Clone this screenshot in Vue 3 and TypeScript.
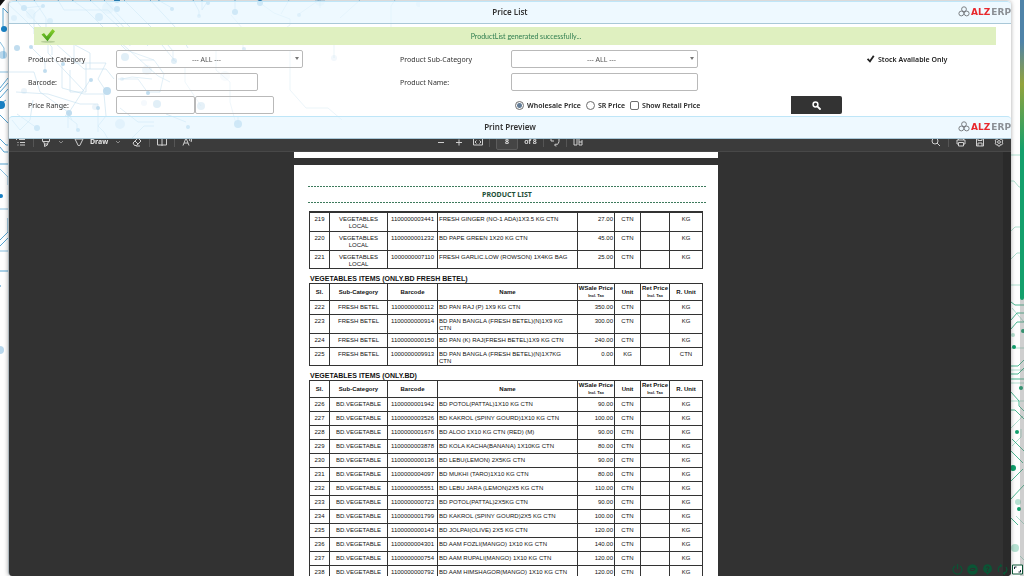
<script setup lang="ts">
import { ref } from 'vue'

interface Item {
  sl: number
  sub: string
  barcode: string
  name: string
  price: string
  unit: string
  rUnit: string
}

interface Section {
  title: string
  items: Item[]
}

function item(sl: number, sub: string, barcode: string, name: string, price: string, unit = 'CTN', rUnit = 'KG'): Item {
  return { sl, sub, barcode, name, price, unit, rUnit }
}

const LOCAL = 'VEGETABLES\nLOCAL'
const BETEL = 'FRESH BETEL'
const BD = 'BD.VEGETABLE'

const sections: Section[] = [
  {
    title: '',
    items: [
      item(219, LOCAL, '1100000003441', 'FRESH GINGER (NO-1 ADA)1X3.5 KG CTN', '27.00'),
      item(220, LOCAL, '1100000001232', 'BD PAPE GREEN 1X20 KG CTN', '45.00'),
      item(221, LOCAL, '1000000007110', 'FRESH GARLIC.LOW (ROWSON) 1X4KG BAG', '25.00'),
    ],
  },
  {
    title: 'VEGETABLES ITEMS (ONLY.BD FRESH BETEL)',
    items: [
      item(222, BETEL, '1100000000112', 'BD PAN RAJ (P) 1X9 KG CTN', '350.00'),
      item(223, BETEL, '1100000000914', 'BD PAN BANGLA (FRESH BETEL)(N)1X9 KG\nCTN', '300.00'),
      item(224, BETEL, '1100000000150', 'BD PAN (K) RAJ(FRESH BETEL)1X9 KG CTN', '240.00'),
      item(225, BETEL, '1000000009913', 'BD PAN BANGLA (FRESH BETEL)(N)1X7KG\nCTN', '0.00', 'KG', 'CTN'),
    ],
  },
  {
    title: 'VEGETABLES ITEMS (ONLY.BD)',
    items: [
      item(226, BD, '1100000001942', 'BD POTOL(PATTAL)1X10 KG CTN', '90.00'),
      item(227, BD, '1100000003526', 'BD KAKROL (SPINY GOURD)1X10 KG CTN', '100.00'),
      item(228, BD, '1100000001676', 'BD ALOO 1X10 KG CTN (RED) (M)', '90.00'),
      item(229, BD, '1100000003878', 'BD KOLA KACHA(BANANA) 1X10KG CTN', '80.00'),
      item(230, BD, '1100000000136', 'BD LEBU(LEMON) 2X5KG CTN', '90.00'),
      item(231, BD, '1100000004097', 'BD MUKHI (TARO)1X10 KG CTN', '80.00'),
      item(232, BD, '1100000005551', 'BD LEBU JARA (LEMON)2X5 KG CTN', '110.00'),
      item(233, BD, '1100000000723', 'BD POTOL(PATTAL)2X5KG CTN', '90.00'),
      item(234, BD, '1100000001799', 'BD KAKROL (SPINY GOURD)2X5 KG CTN', '100.00'),
      item(235, BD, '1100000000143', 'BD JOLPAI(OLIVE) 2X5 KG CTN', '120.00'),
      item(236, BD, '1100000004301', 'BD AAM FOZLI(MANGO) 1X10 KG CTN', '140.00'),
      item(237, BD, '1100000000754', 'BD AAM RUPALI(MANGO) 1X10 KG CTN', '120.00'),
      item(238, BD, '1100000000792', 'BD AAM HIMSHAGOR(MANGO) 1X10 KG CTN', '120.00'),
    ],
  },
]

const priceType = ref<'wholesale' | 'sr'>('wholesale')
const showRetail = ref(false)
const stockOnly = ref(true)
const category = ref('all')
const subCategory = ref('all')
const barcode = ref('')
const productName = ref('')
const priceFrom = ref('')
const priceTo = ref('')
const pageNo = ref('8')
</script>

<template>
  <div class="desktop">
    <svg class="circuit circuit-left" width="420" height="576" viewBox="0 0 420 576" fill="none" stroke="#2a8cc4" stroke-width="1" aria-hidden="true">
      <path d="M0 0h5l-5 6z" fill="#111" stroke="none" />
      <g stroke-opacity=".8">
        <path d="M3 8v20M3 8l5 5M0 88l8-10M0 92l8-9M0 98l8-9M0 104l6-4M0 115l8 8M0 139l6 6h3M0 147l4 5h5M0 164h9M0 240l8-8v-14M0 246l8-8M0 271h9" />
      </g>
      <g stroke-opacity=".55">
        <path d="M0 169l8 8v8M0 209h9M0 251h9M0 42l4 6v10" />
        <path d="M8 4l14 13 30 30v8M16 0l32 35v18l36 38M24 8l19-2M34 0l12 18v17l38 34h22l8 10M58 0l6 10h44l20 22 2 14M43 6l-9 8v20M72 0l14 10 40 40 28 10M90 0l30 28v14l38 34 12 6M104 0l44 46M150 0l26 28 12 20M124 0l40 40h16M172 8l-14-8M193 0l6 11v5M207 2l-5 8v-10M235 10v-10" />
        <path d="M31 47l14 14v10M62 64v24l22 6h20l2 22-8 10 6 6 8 14h12l20-20h10M75 45l15 8v16M90 80l-22 34v14M106 91l-8-12 8-16h-32v-18M16 92l32 2 32 10h18v28M12 120l8 10 10-10 3-20M0 72h34l6 20 28 20 4 8M140 60h14l10 14-4 18h-12M158 40l8 10 10 12M148 93l-10-14h-20M173 61v-10l-12-14M122 79l10-2 20 2" />
        <path d="M77 130v-6l-12-9M37 128l-20-14M70 70v22h16v-28M120 108l18 14h16M186 122l-20-8M238 124v-8" />
      </g>
      <g stroke-opacity=".3">
        <path d="M260 3l14 10 16 6v6l-20 14M299 14l20-14M281 14l8-14M320 0v8M340 18l20-18M391 40v-34l4-6M216 50v20l14 12v20l6 22M243 49v-20l-12-14M290 50v40l16 18h22l14 12M334 58v-14M201 106l-16-24v-14" />
      </g>
      <g stroke="none" fill="#187fc2">
        <circle cx="4" cy="29" r="3" /><circle cx="1" cy="105" r="4" /><circle cx="1" cy="196" r="2" />
        <circle cx="3" cy="55" r="4" opacity=".3" /><circle cx="0" cy="350" r="4" opacity=".3" /><circle cx="0" cy="286" r="1" opacity=".6" />
      </g>
      <g stroke="none" fill="#187fc2" opacity=".9">
        <circle cx="24" cy="8" r="3" /><circle cx="43" cy="6" r="2" /><circle cx="117" cy="0" r="3" /><circle cx="117" cy="9" r="3" />
        <circle cx="99" cy="17" r="4" opacity=".7" /><circle cx="50" cy="21" r="3" opacity=".6" /><circle cx="14" cy="18" r="3" opacity=".5" />
        <circle cx="172" cy="9" r="2" /><circle cx="235" cy="12" r="3" /><circle cx="260" cy="3" r="3" /><circle cx="208" cy="3" r="2" />
        <circle cx="199" cy="16" r="2" opacity=".5" /><circle cx="299" cy="15" r="2" opacity=".5" /><circle cx="108" cy="8" r="6" opacity=".25" />
        <circle cx="31" cy="14" r="5" opacity=".25" /><circle cx="320" cy="1" r="5" opacity=".2" /><circle cx="419" cy="4" r="3" opacity=".2" />
        <circle cx="17" cy="48" r="3" /><circle cx="31" cy="47" r="2" /><circle cx="63" cy="64" r="2" /><circle cx="45" cy="71" r="2" />
        <circle cx="91" cy="80" r="2" /><circle cx="107" cy="91" r="4" /><circle cx="98" cy="108" r="2" /><circle cx="69" cy="113" r="3" />
        <circle cx="125" cy="57" r="4" opacity=".6" /><circle cx="174" cy="61" r="3" opacity=".6" /><circle cx="148" cy="93" r="2" />
        <circle cx="157" cy="104" r="4" opacity=".6" /><circle cx="122" cy="79" r="2" opacity=".4" /><circle cx="201" cy="106" r="4" opacity=".5" />
        <circle cx="24" cy="91" r="3" opacity=".3" /><circle cx="95" cy="107" r="3" opacity=".3" /><circle cx="144" cy="103" r="3" opacity=".2" />
        <circle cx="244" cy="49" r="2" opacity=".5" /><circle cx="334" cy="58" r="3" opacity=".2" /><circle cx="225" cy="76" r="5" opacity=".15" />
        <circle cx="37" cy="128" r="3" /><circle cx="78" cy="130" r="2" /><circle cx="188" cy="127" r="2" /><circle cx="238" cy="124" r="4" />
        <circle cx="120" cy="124" r="5" opacity=".4" /><circle cx="147" cy="70" r="5" opacity=".25" />
      </g>
    </svg>

    <svg class="circuit circuit-right" width="14" height="576" viewBox="0 0 14 576" fill="none" stroke="#1fa577" stroke-width="1" aria-hidden="true">
      <g stroke-opacity=".35">
        <path d="M0 155h14M1 181h3l5 6h5M0 232l5-5h9M0 260l7-7h7M0 285h14M2 308l12 14M0 348h14M0 370h14M0 401h14M0 383h14M1 428l12-12M2 446l9-9v-8M6 516l8 8M10 556l4 4" />
      </g>
      <g stroke-opacity=".8">
        <path d="M1 302l4 3h9M1 320l6-7h7M1 329l6-7h7M0 366h8l6-6M0 374h8l6-6M0 379h14M1 392l8 9v5l5 5M1 410h4l9 9M2 439l12 12M1 451l12 12M1 481l12-12M1 499l13-14M0 517l8 8" />
      </g>
      <g stroke="none" fill="#119f6c">
        <circle cx="4" cy="347" r="2" /><circle cx="13" cy="331" r="2" /><circle cx="11" cy="388" r="2" /><circle cx="7" cy="432" r="2" /><circle cx="3" cy="468" r="3" /><circle cx="9" cy="509" r="2" />
        <circle cx="3" cy="335" r="2" opacity=".3" /><circle cx="8" cy="502" r="3" opacity=".3" /><circle cx="5" cy="548" r="4" opacity=".3" />
      </g>
    </svg>

    <div class="page-scroll" aria-hidden="true"><div class="page-thumb"></div></div>

    <main class="window">
      <header class="bar">
        <span></span>
        <h1>Price List</h1>
        <div class="brand">
          <svg width="12" height="11" viewBox="0 0 12 11" fill="none" stroke="#7b7f83" stroke-width="1"><circle cx="6" cy="3.2" r="2.4" /><circle cx="3.3" cy="7.5" r="2.4" /><circle cx="8.7" cy="7.5" r="2.4" /></svg>
          <span class="alz">ALZ</span><span class="erp">ERP</span>
        </div>
      </header>

      <div class="notice" role="status">
        <svg class="tick" width="16" height="14" viewBox="0 0 16 14">
          <defs><linearGradient id="tickFill" x1="0" y1="0" x2="0" y2="1"><stop offset="0" stop-color="#8ed32a" /><stop offset="1" stop-color="#3d9a1c" /></linearGradient></defs>
          <ellipse cx="8" cy="12.8" rx="7" ry="1" fill="#b8cf9b" />
          <path d="M1.5 5.5 4 4l2.7 3.2L12.5 0 15 2.2 7.5 12.2z" fill="url(#tickFill)" />
        </svg>
        <span>ProductList generated successfully...</span>
      </div>

      <form class="filters" @submit.prevent>
        <label for="category">Product Category</label>
        <div class="select">
          <select id="category" v-model="category"><option value="all">--- ALL ---</option></select>
          <svg width="4" height="3" viewBox="0 0 4 3"><path d="M0 0h4L2 3z" fill="#777" /></svg>
        </div>
        <label for="subcategory">Product Sub-Category</label>
        <div class="select">
          <select id="subcategory" v-model="subCategory"><option value="all">--- ALL ---</option></select>
          <svg width="4" height="3" viewBox="0 0 4 3"><path d="M0 0h4L2 3z" fill="#777" /></svg>
        </div>
        <label class="choice stock">
          <input v-model="stockOnly" type="checkbox" class="plain" />
          <span>Stock Available Only</span>
        </label>

        <label for="barcode">Barcode:</label>
        <input id="barcode" v-model="barcode" class="field barcode" type="text" />
        <label for="name">Product Name:</label>
        <input id="name" v-model="productName" class="field name" type="text" />
        <span></span>

        <label for="from">Price Range:</label>
        <div class="range">
          <input id="from" v-model="priceFrom" class="field" type="text" />
          <input v-model="priceTo" class="field" type="text" aria-label="Price to" />
        </div>
        <span></span>
        <div class="choices">
          <label class="choice"><input v-model="priceType" type="radio" name="price" value="wholesale" /><span>Wholesale Price</span></label>
          <label class="choice"><input v-model="priceType" type="radio" name="price" value="sr" /><span>SR Price</span></label>
          <label class="choice"><input v-model="showRetail" type="checkbox" /><span>Show Retail Price</span></label>
        </div>
        <button class="search" type="submit" aria-label="Search">
          <svg width="9" height="9" viewBox="0 0 9 9" fill="none" stroke="#fff"><circle cx="3.500" cy="3.500" r="2.400" stroke-width="1.500" /><path d="M5.300 5.300 8 8" stroke-width="1.800" stroke-linecap="round" /></svg>
        </button>
      </form>

      <header class="bar">
        <span></span>
        <h1>Print Preview</h1>
        <div class="brand">
          <svg width="12" height="11" viewBox="0 0 12 11" fill="none" stroke="#7b7f83" stroke-width="1"><circle cx="6" cy="3.2" r="2.4" /><circle cx="3.3" cy="7.5" r="2.4" /><circle cx="8.7" cy="7.5" r="2.4" /></svg>
          <span class="alz">ALZ</span><span class="erp">ERP</span>
        </div>
      </header>

      <section class="viewer">
        <div class="toolbar">
          <div class="tools">
            <button type="button" aria-label="Contents"><svg width="10" height="10" viewBox="0 0 10 10"><path d="M0 2.500h1M3 2.500h6M1.500 5.500h1M4 5.500h5M1.500 8h1M4 8h5" /></svg></button>
            <i></i>
            <button type="button" aria-label="Highlight"><svg width="10" height="10" viewBox="0 0 10 10"><path d="M1.500 1v3.500h7V1M2.500 4.500 3.500 7h3l1-2.500M3.500 7v2.500l3-1.500V7" /></svg></button>
            <button type="button" aria-label="Highlight colours"><svg width="6" height="10" viewBox="0 0 6 10"><path d="m1 4 2 2 2-2" stroke="#8a8a8a" /></svg></button>
            <button type="button" class="draw"><svg width="10" height="10" viewBox="0 0 10 10"><path d="M1 2h8L5.800 8.500H4.200z" /></svg><b>Draw</b></button>
            <button type="button" aria-label="Pen options"><svg width="6" height="10" viewBox="0 0 6 10"><path d="m1 4 2 2 2-2" stroke="#8a8a8a" /></svg></button>
            <button type="button" class="eraser" aria-label="Erase"><svg width="10" height="10" viewBox="0 0 10 10"><path d="M1 6 6 1l3 3-4.500 4.500h-2zM3 4l3.200 3.200M4 9h4" /></svg></button>
            <i></i>
            <button type="button" aria-label="Page view"><svg width="10" height="10" viewBox="0 0 10 10"><path d="M.500 1.500h9v6.500h-9zM5 1.500v7.500" /></svg></button>
            <i></i>
            <button type="button" aria-label="Read aloud"><svg width="10" height="10" viewBox="0 0 10 10"><path d="M1 8.500 4 1l3 7.500M2 6h4M7.500 2q1 1 0 2M9 1q1.500 2 0 4" /></svg></button>
          </div>
          <div class="tools middle">
            <button type="button" class="minus" aria-label="Zoom out"><svg width="8" height="10" viewBox="0 0 8 10"><path d="M1 5.500h6" /></svg></button>
            <button type="button" class="plus" aria-label="Zoom in"><svg width="8" height="10" viewBox="0 0 8 10"><path d="M1 5.500h6M4 2.500v6" /></svg></button>
            <button type="button" aria-label="Fit width"><svg width="10" height="10" viewBox="0 0 10 10"><path d="M.500 1.500h9v6.500h-9zM3.500 3.500 2 5l1.500 1.500M6.500 3.500 8 5 6.500 6.500" /></svg></button>
            <i></i>
            <div class="pager"><input v-model="pageNo" type="text" aria-label="Page" /><span>of 8</span></div>
            <i></i>
            <button type="button" aria-label="Rotate"><svg width="10" height="10" viewBox="0 0 10 10"><path d="M1 1v3h3M6 9.500 4.500 8 6 6.500M5 8q4.500 0 4-6" /></svg></button>
            <i></i>
            <button type="button" aria-label="Layout"><svg width="10" height="10" viewBox="0 0 10 10"><path d="M1 1.500v6.500h3V1.500M6 8h3V3M6 1.500V8M6 5h3" /></svg></button>
          </div>
          <div class="tools end">
            <button type="button" aria-label="Find"><svg width="10" height="10" viewBox="0 0 10 10"><circle cx="4" cy="4" r="3" /><path d="m6 6 3 3" /></svg></button>
            <i></i>
            <button type="button" aria-label="Print"><svg width="10" height="10" viewBox="0 0 10 10"><path d="M2.500 3V1h5v2M2.500 7H1V3h8v4H7.500M2.500 5.500h5V9h-5z" /></svg></button>
            <button type="button" aria-label="Save"><svg width="10" height="10" viewBox="0 0 10 10"><path d="M1.500 1h6l1 1v7h-7zM3 1v2.500h4V1M3 9V6h4v3" /></svg></button>
            <button type="button" aria-label="Settings"><svg width="10" height="10" viewBox="0 0 10 10"><circle cx="5" cy="5" r="1.400" /><path d="M4 1h2l.4 1.400 1.400-.2 1 1.700L8 5l.8 1.200-1 1.700-1.400-.3L6 9H4l-.4-1.400-1.400.3-1-1.700L2 5l-.8-1.100 1-1.700 1.400.2z" /></svg></button>
          </div>
        </div>

        <div class="canvas">
          <div class="sheet previous"></div>
          <article class="sheet">
            <h2>PRODUCT LIST</h2>
            <template v-for="(section, s) in sections" :key="s">
              <h3 v-if="section.title">{{ section.title }}</h3>
              <table :class="{ continued: !section.title }">
                <colgroup>
                  <col class="c-sl" /><col class="c-sub" /><col class="c-code" /><col class="c-name" />
                  <col class="c-price" /><col class="c-unit" /><col class="c-ret" /><col />
                </colgroup>
                <thead v-if="section.title">
                  <tr>
                    <th>Sl.</th>
                    <th>Sub-Category</th>
                    <th>Barcode</th>
                    <th>Name</th>
                    <th>WSale Price<small>Incl. Tax</small></th>
                    <th>Unit</th>
                    <th>Ret Price<small>Incl. Tax</small></th>
                    <th>R. Unit</th>
                  </tr>
                </thead>
                <tbody>
                  <tr v-for="row in section.items" :key="row.sl" :class="{ tall: (row.sub + row.name).includes('\n') }">
                    <td>{{ row.sl }}</td>
                    <td>{{ row.sub }}</td>
                    <td>{{ row.barcode }}</td>
                    <td class="left">{{ row.name }}</td>
                    <td class="right">{{ row.price }}</td>
                    <td>{{ row.unit }}</td>
                    <td></td>
                    <td>{{ row.rUnit }}</td>
                  </tr>
                </tbody>
              </table>
            </template>
          </article>
        </div>
      </section>
    </main>

    <nav class="dock" aria-label="Quick actions">
      <button type="button" aria-label="Log out"><svg width="11" height="11" viewBox="0 0 11 11" fill="none" stroke="#0b5435" stroke-width="1.200"><path d="M3 2a4.500 4.500 0 1 0 5 0M5.500 0v5" /></svg></button>
      <button type="button" aria-label="Edit"><svg width="11" height="11" viewBox="0 0 11 11"><circle cx="5.500" cy="5.500" r="5.300" fill="#0b5435" /><path d="M3 6.500q0-2 2-2h2.500M8 4.500q0 2-2 2H3.500" fill="none" stroke="#2f2f2f" /></svg></button>
      <button type="button" aria-label="Help"><svg width="11" height="11" viewBox="0 0 11 11"><path d="M5.500.3a4.500 4.500 0 0 1 1.800 8.600L5.500 11 4 9A4.500 4.500 0 0 1 5.500.3z" fill="#0b5435" /><path d="M4 3.500q1.500-1.500 3 0 0 1-1.500 2v.8M5.500 7v1" fill="none" stroke="#2f2f2f" /></svg></button>
      <button type="button" aria-label="Refresh"><svg width="11" height="11" viewBox="0 0 11 11" fill="none" stroke="#0b5435" stroke-width="1.200"><path d="M2 8a4.200 4.200 0 0 1 2-6.500M3 .5l1.500 1-1 1.800M9 3a4.200 4.200 0 0 1-2 6.500M8 10.500l-1.500-1 1-1.800" /></svg></button>
      <button type="button" aria-label="Full screen"><svg width="11" height="11" viewBox="0 0 11 11"><path d="M.500 1h10v9h-10z" fill="#fff" stroke="#0b5435" /><path d="M2.500 5V3h2M6.500 8h2V6" fill="none" stroke="#123" /></svg></button>
    </nav>
  </div>
</template>

<style>
html,
body {
  margin: 0;
  background: #fff;
  overflow: hidden;
}
</style>

<style scoped>
* {
  box-sizing: border-box;
}
.desktop {
  position: relative;
  display: flex;
  height: 100vh;
  padding: 1px 13px 0 8px;
  background: #fefefe;
  font-family: "Noto Sans", "Open Sans", sans-serif;
  font-size: 7px;
  color: #333;
}
.circuit {
  position: absolute;
  top: 0;
}
.circuit-left {
  left: 0;
}
.circuit-right {
  right: 0;
}
.page-scroll {
  position: absolute;
  top: 0;
  right: 0;
  width: 4px;
  height: 100%;
  background: rgba(120, 120, 120, 0.35);
}
.page-thumb {
  height: 52%;
  border-radius: 0 0 2px 2px;
  background: linear-gradient(#4f83a8 0, #4f83a8 14%, #93a33c 28%, #14a06c 50%, #14a06c 100%);
}
.window {
  position: relative;
  flex: 1;
  min-width: 0;
  display: flex;
  flex-direction: column;
  border-left: 1px solid #a9b4ba;
  border-radius: 4px;
  background: rgba(255, 255, 255, 0.7);
  box-shadow: 0 0 4px rgba(0, 0, 0, 0.35);
  overflow: hidden;
}
.bar {
  position: relative;
  flex: none;
  display: grid;
  grid-template-columns: 1fr auto 1fr;
  align-items: center;
  height: 23px;
  padding-bottom: 2px;
  border-top: 1px solid #bfe6f8;
  border-bottom: 1px solid #a9c8d8;
  border-radius: 4px 4px 0 0;
  background: rgba(222, 244, 255, 0.5);
}
h1 {
  margin: 0;
  font-size: 8px;
  line-height: 12px;
  font-weight: 600;
}
.brand {
  display: flex;
  align-items: center;
  justify-content: flex-end;
  font-family: "DejaVu Sans", sans-serif;
  font-size: 9px;
  font-weight: 700;
  line-height: 10px;
}
.brand svg {
  margin-right: 1px;
}
.alz {
  color: #e8282d;
}
.erp {
  margin-left: 1px;
  color: #8b8f94;
}
.notice {
  flex: none;
  display: flex;
  align-items: center;
  height: 18px;
  margin: 3px 15px 0 25px;
  padding-left: 6px;
  background: #dff0c0;
  color: #2e7d4f;
  font-family: Lato, "Noto Sans", sans-serif;
}
.notice span {
  flex: 1;
  text-align: center;
}
.tick {
  display: block;
}
.filters {
  flex: none;
  display: grid;
  grid-template-columns: 88fr 284fr 111fr 280fr 220fr;
  grid-auto-rows: 18px;
  row-gap: 5px;
  align-items: center;
  padding: 5px 0 2px 19px;
}
.select {
  position: relative;
  width: 187px;
  height: 18px;
}
.select svg {
  position: absolute;
  top: 7px;
  right: 4px;
}
select,
.field {
  display: block;
  width: 100%;
  height: 18px;
  margin: 0;
  padding: 0 3px;
  border: 1px solid #b9b9b9;
  border-radius: 2px;
  background: rgba(255, 255, 255, 0.2);
  font: inherit;
  color: #555;
  outline: none;
}
select {
  appearance: none;
  padding-right: 9px;
  text-align-last: center;
}
.barcode {
  width: 142px;
}
.name {
  width: 187px;
}
.range {
  display: flex;
  width: 158px;
}
.choices {
  display: flex;
  align-items: center;
  gap: 5px;
  padding-left: 4px;
}
.choice {
  display: flex;
  align-items: center;
  gap: 3px;
  font-weight: 600;
  color: #222;
  white-space: nowrap;
}
.stock {
  padding-left: 75px;
}
.choice input {
  appearance: none;
  width: 9px;
  height: 9px;
  margin: 0;
  border: 1px solid #6d6d6d;
  border-radius: 2px;
  background: #fff;
}
.choice input[type="radio"] {
  border-radius: 50%;
}
.choice input[type="radio"]:checked {
  background: radial-gradient(circle, #647d97 0 2px, #fff 3px);
}
.choice .plain {
  border: 0;
  background: #f7f6fd;
}
.choice .plain:checked {
  background: #f7f6fd linear-gradient(#222, #222) no-repeat;
  clip-path: polygon(10% 55%, 25% 42%, 42% 62%, 78% 8%, 95% 20%, 45% 92%);
}
.search {
  display: grid;
  place-items: center;
  width: 51px;
  height: 18px;
  padding: 0;
  border: 0;
  border-radius: 0 2px 2px 0;
  background: #333;
}
.viewer {
  flex: 1;
  min-height: 0;
  display: flex;
  flex-direction: column;
  overflow: hidden;
  background: #323232;
}
.toolbar {
  flex: none;
  display: grid;
  grid-template-columns: 1fr auto 1fr;
  align-items: center;
  height: 20px;
  margin-top: -7px;
  padding: 0 7px;
  border-bottom: 1px solid #484848;
  background: #3b3b3b;
  color: #e4e4e4;
}
.tools {
  display: flex;
  align-items: center;
  gap: 7px;
}
.tools .minus {
  margin-right: 4px;
}
.tools .plus {
  margin-right: 4px;
}
.tools.middle {
  gap: 6px;
}
.tools.end {
  justify-content: flex-end;
  gap: 9px;
}
.tools i {
  width: 1px;
  height: 10px;
  background: #555;
}
.tools.end i {
  margin: 0 -2px;
}
.tools button {
  display: flex;
  align-items: center;
  gap: 6px;
  padding: 0;
  border: 0;
  background: none;
  color: inherit;
  font: inherit;
  line-height: 8px;
}
.tools svg {
  display: block;
  fill: none;
  stroke: #cfcfcf;
}
.tools .draw {
  padding-left: 3px;
}
.tools .eraser {
  padding-left: 4px;
}
.pager {
  display: flex;
  align-items: center;
  gap: 6px;
  font-weight: 600;
  line-height: 8px;
}
.pager input {
  width: 22px;
  height: 16px;
  padding: 0;
  border: 1px solid #5c5c5c;
  border-radius: 2px;
  background: #454545;
  font: inherit;
  text-align: center;
  color: #eee;
}
.canvas {
  flex: 1;
  min-height: 0;
  display: flex;
  flex-direction: column;
  align-items: center;
  gap: 7px;
  overflow: hidden;
  border-right: 8px solid #2a2a2a;
}
.sheet {
  flex: none;
  width: 424px;
  padding: 21px 15px 20px;
  background: #fff;
  color: #111;
  font: 6px/7px "Liberation Sans", Arial, sans-serif;
}
.previous {
  height: 6px;
  padding: 0;
}
h2 {
  margin: 0 -3px 8px -1px;
  padding: 4px 0;
  background:
    repeating-linear-gradient(90deg, #3d7a5c 0 2px, transparent 2px 3px) top / 100% 1px no-repeat,
    repeating-linear-gradient(90deg, #3d7a5c 0 2px, transparent 2px 3px) bottom / 100% 1px no-repeat;
  font: 700 7px/9px "Noto Sans", "Open Sans", sans-serif;
  color: #1d4f37;
  text-align: center;
}
h3 {
  margin: 6px 0 0 1px;
  font-size: 7px;
  line-height: 8px;
  font-weight: 700;
}
table {
  width: 100%;
  table-layout: fixed;
  border-collapse: collapse;
}
.continued {
  border-top: 2px solid #333;
}
.c-sl {
  width: 20px;
}
.c-sub {
  width: 58px;
}
.c-code {
  width: 50px;
}
.c-name {
  width: 140px;
}
.c-price {
  width: 37px;
}
.c-unit {
  width: 26px;
}
.c-ret {
  width: 29px;
}
th,
td {
  border: 1px solid #333;
  padding: 3px 1px;
  text-align: center;
  vertical-align: top;
  white-space: pre-line;
}
th {
  padding: 1px 0;
  vertical-align: middle;
  white-space: nowrap;
}
th small {
  display: block;
  font-size: 4px;
}
.tall td {
  padding-bottom: 1px;
}
.tall:last-child td {
  padding-bottom: 0;
}
td.left {
  text-align: left;
}
td.right {
  text-align: right;
}
.dock {
  position: absolute;
  right: 1px;
  bottom: 1px;
  display: flex;
  gap: 4px;
}
.dock button {
  display: block;
  padding: 0;
  border: 0;
  background: none;
}
.dock svg {
  display: block;
}
</style>
